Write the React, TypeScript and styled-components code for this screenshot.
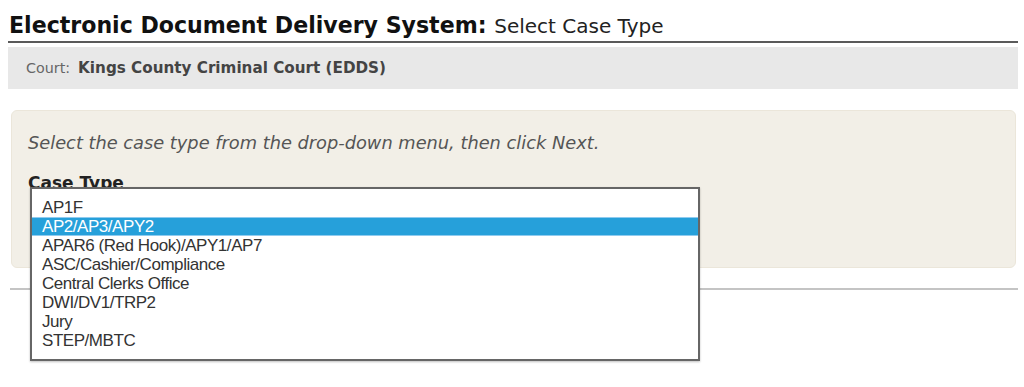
import React from "react";
import styled, { createGlobalStyle } from "styled-components";

const Global = createGlobalStyle`
  html, body { margin: 0; padding: 0; background: #ffffff; }
  body { padding: 0 6px 0 8px; min-height: 387px; font-family: "DejaVu Sans", Verdana, sans-serif; }
`;

const Page = styled.div`
  width: 1010px;
  min-height: 387px;
  display: flex;
  flex-direction: column;
`;

const Title = styled.h1`
  margin: 12px 0 0;
  padding: 0 0 1px 1px;
  border-bottom: 2px solid #5a5a5a;
  font-family: "DejaVu Sans", Verdana, sans-serif;
  font-size: 22.1px;
  font-weight: bold;
  color: #111;
  line-height: 27px;
  white-space: nowrap;
`;

const Sub = styled.span`
  font-weight: normal;
  font-size: 20px;
  color: #222;
`;

const CourtBar = styled.div`
  margin-top: 4px;
  height: 42px;
  background: #e8e8e8;
  display: flex;
  align-items: center;
  padding-left: 18px;
  gap: 8px;
  font-family: "DejaVu Sans", Verdana, sans-serif;
`;

const CourtLabel = styled.span`
  font-size: 14.3px;
  color: #666;
`;

const CourtName = styled.span`
  font-size: 15.2px;
  font-weight: bold;
  color: #444;
`;

const Panel = styled.div`
  position: relative;
  margin: 21px 2px 0 3px;
  height: 158px;
  background: #f2efe7;
  border: 1px solid #ebe6da;
  border-radius: 6px;
  padding: 20px 0 0 16px;
  box-sizing: border-box;
`;

const Instruction = styled.p`
  margin: 0;
  font-style: italic;
  font-size: 17.8px;
  color: #555;
  line-height: 24px;
`;

const Label = styled.div`
  margin-top: 18px;
  font-weight: bold;
  font-size: 17px;
  color: #222;
`;

const ListBox = styled.div`
  position: absolute;
  left: 18px;
  top: 76px;
  width: 670px;
  height: 174px;
  background: #fff;
  border: 2px solid #666;
  box-shadow: 0 1px 2px rgba(0, 0, 0, 0.25);
  padding: 9px 0;
  box-sizing: border-box;
  display: flex;
  flex-direction: column;
  z-index: 2;
`;

const Option = styled.div<{ $selected?: boolean }>`
  height: 19px;
  line-height: 19px;
  padding-left: 10px;
  font-family: "Liberation Sans", Arial, sans-serif;
  font-size: 17px;
  letter-spacing: -0.45px;
  color: ${(p) => (p.$selected ? "#fff" : "#333")};
  background: ${(p) => (p.$selected ? "#26a0da" : "transparent")};
  box-shadow: ${(p) => (p.$selected ? "inset 0 1px 0 #8fcbef, inset 0 -1px 0 #8fcbef" : "none")};
  white-space: nowrap;
`;

const Rule = styled.div`
  margin: 20px 0 0 2px;
  height: 2px;
  background: #c4c4c4;
`;

const options = [
  "AP1F",
  "AP2/AP3/APY2",
  "APAR6 (Red Hook)/APY1/AP7",
  "ASC/Cashier/Compliance",
  "Central Clerks Office",
  "DWI/DV1/TRP2",
  "Jury",
  "STEP/MBTC",
];

export default function App() {
  return (
    <>
      <Global />
      <Page>
        <Title>
          Electronic Document Delivery System: <Sub>Select Case Type</Sub>
        </Title>
        <CourtBar>
          <CourtLabel>Court:</CourtLabel>
          <CourtName>Kings County Criminal Court (EDDS)</CourtName>
        </CourtBar>
        <Panel>
          <Instruction>Select the case type from the drop-down menu, then click Next.</Instruction>
          <Label>Case Type</Label>
          <ListBox role="listbox">
            {options.map((o, i) => (
              <Option key={o} $selected={i === 1} role="option">
                {o}
              </Option>
            ))}
          </ListBox>
        </Panel>
        <Rule />
      </Page>
    </>
  );
}
